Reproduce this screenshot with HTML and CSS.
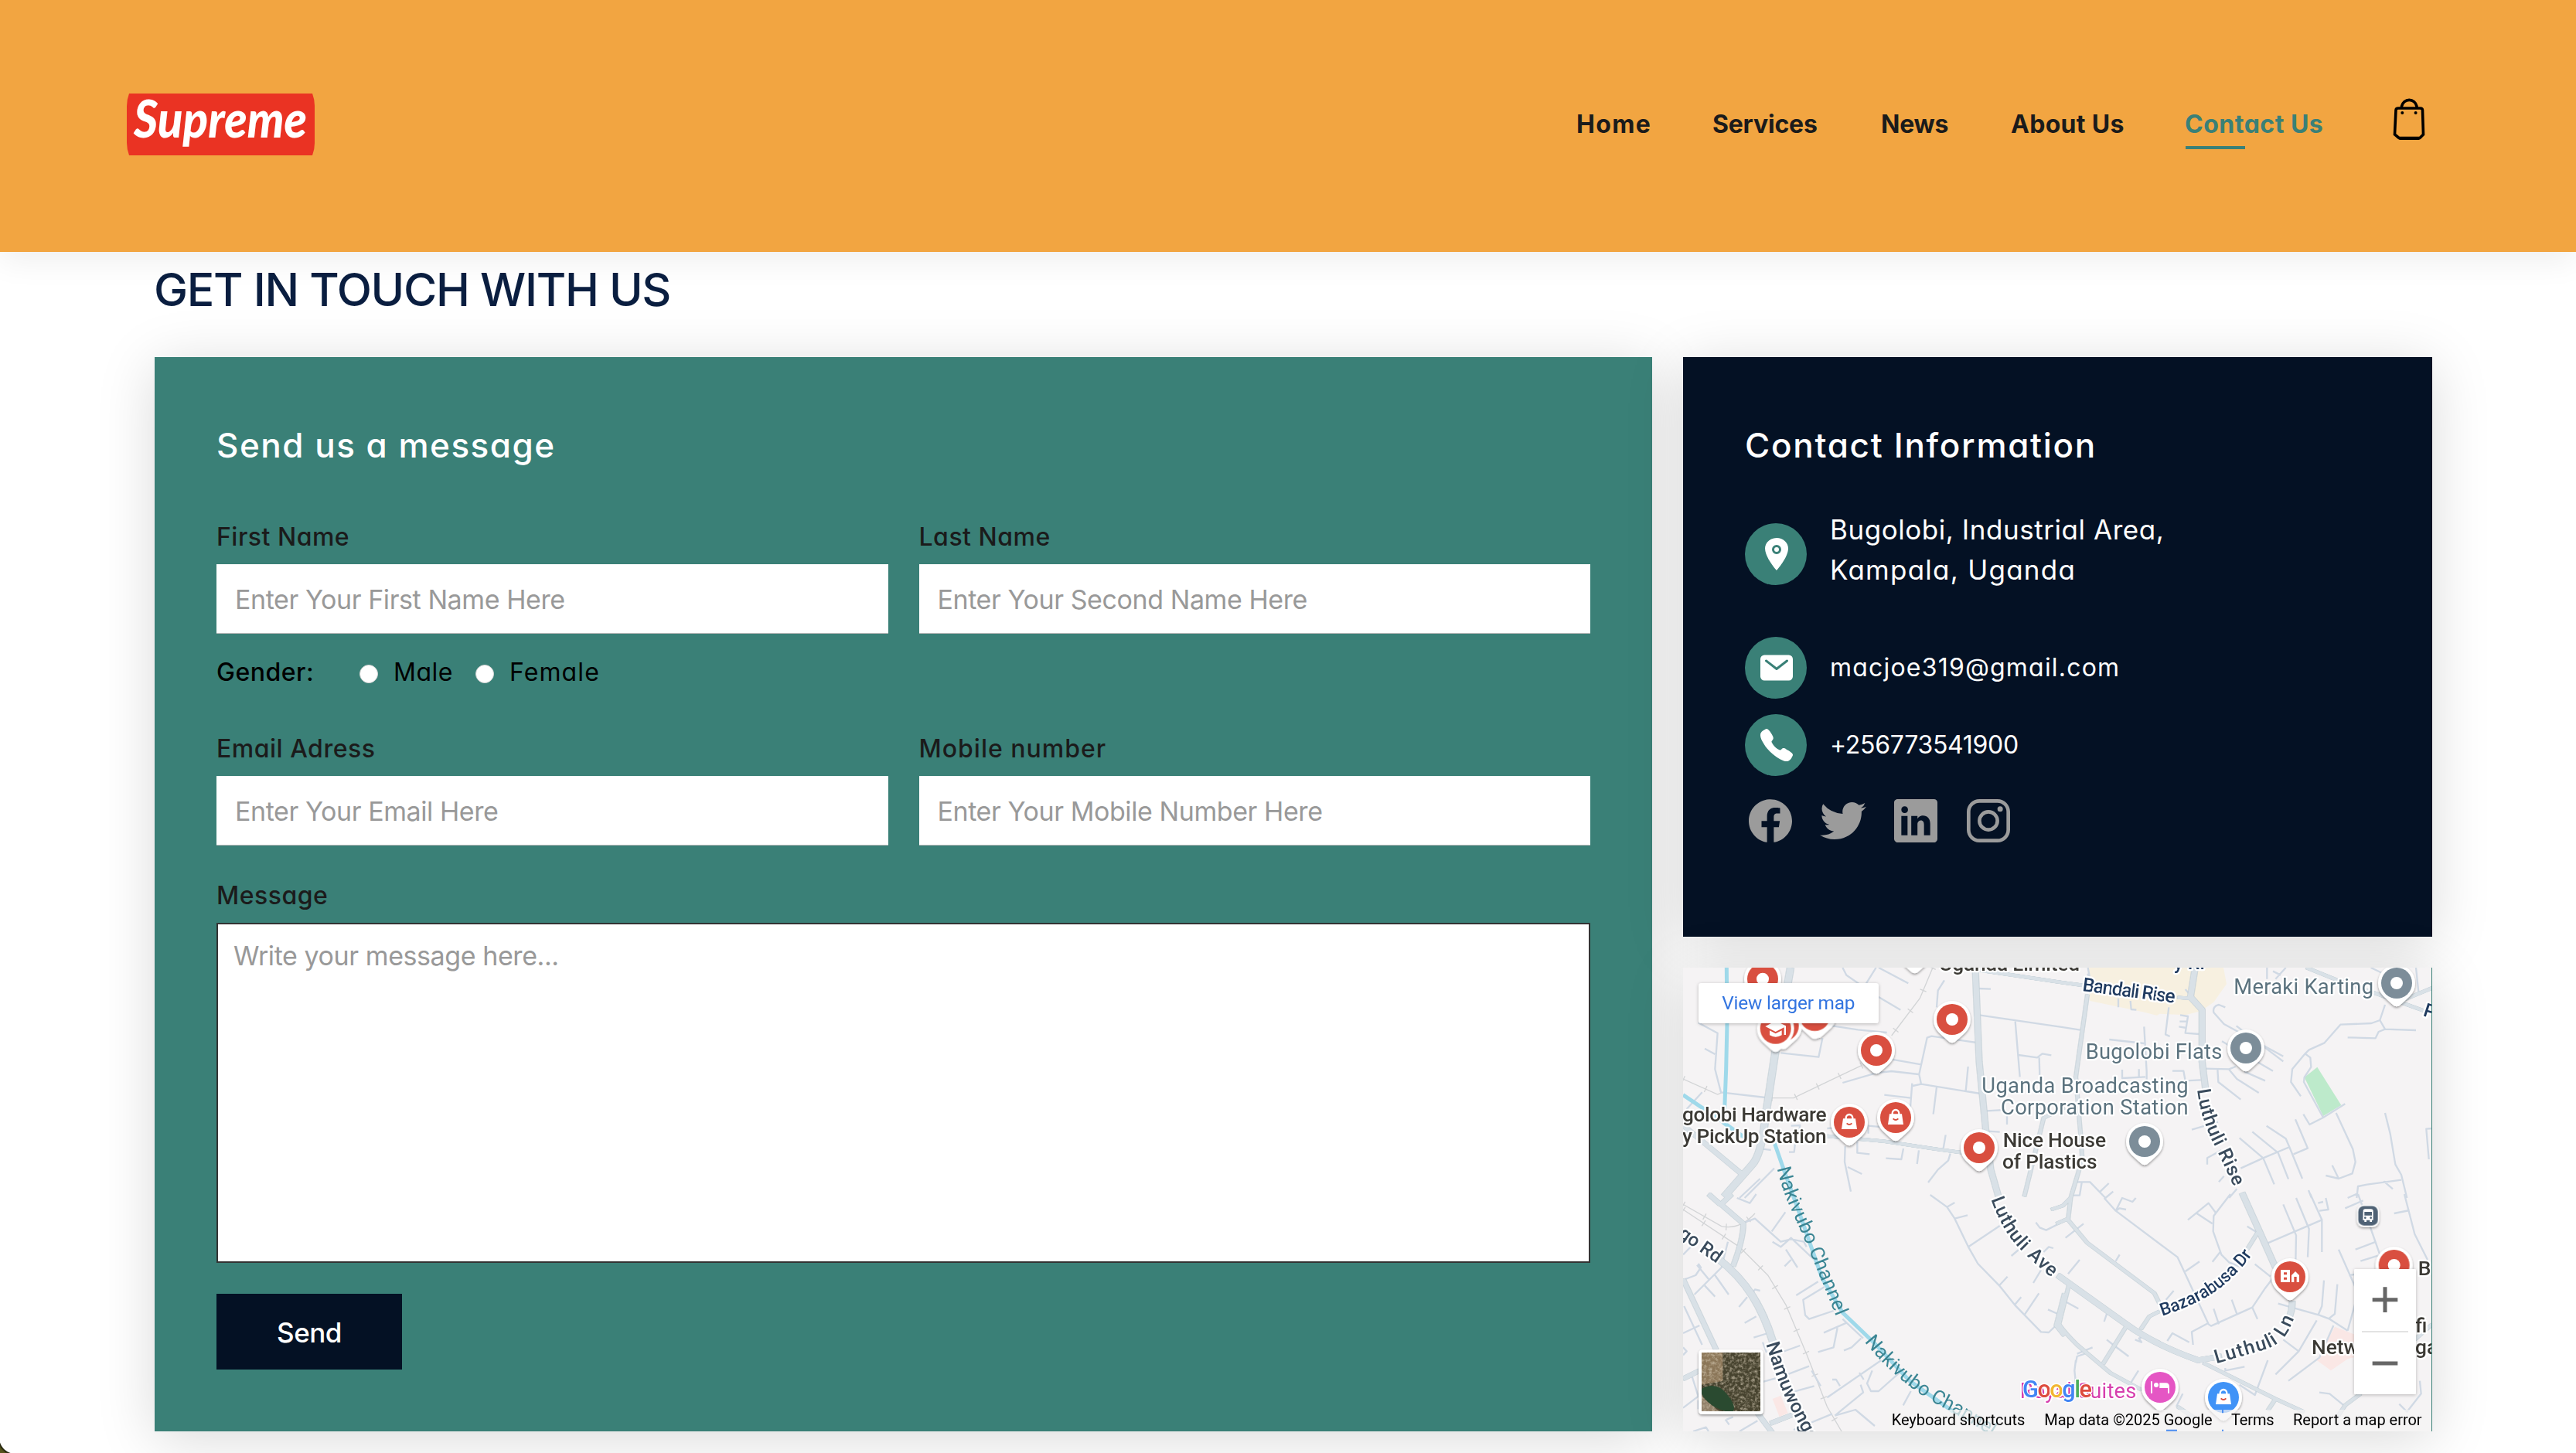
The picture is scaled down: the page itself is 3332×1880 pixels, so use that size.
FILE: index.html
```html
<!DOCTYPE html>
<html lang="en">
<head>
<meta charset="utf-8">
<title>Contact Us</title>
<link rel="stylesheet" href="styles.css">
</head>
<body>
<header class="header">
  <a class="logo" href="#">
    <svg viewBox="0 0 243 80" width="243" height="80">
      <path d="M3 0H240Q243 8 243 16V64Q243 72 240 80H3Q0 72 0 64V16Q0 8 3 0Z" fill="#ea3323"/>
      <text class="logo-text" x="9" y="56.500" textLength="224" lengthAdjust="spacingAndGlyphs">Supreme</text>
    </svg>
  </a>
  <nav class="nav">
    <a class="nav-link" href="#"><span class="nav-home">Home</span></a>
    <a class="nav-link" href="#"><span class="nav-services">Services</span></a>
    <a class="nav-link" href="#"><span class="nav-news">News</span></a>
    <a class="nav-link" href="#"><span class="nav-about">About Us</span></a>
    <a class="nav-link active" href="#"><span class="nav-contact">Contact Us</span></a>
    <a class="bag" href="#">
      <svg viewBox="26 12 60 62" width="60" height="62" fill="none" stroke="#000">
        <path d="M46.500 30V28.500A10 10.500 0 0 1 66 28.500V30" stroke-width="3.600"/>
        <path d="M42 31H70.500Q73.300 31 73.500 33.500L74.500 65L70 69.500H43L37.500 65L39 33.500Q39.200 31 42 31Z" stroke-width="3.600"/>
        <path d="M39 68.500H73L69 72H44Z" fill="#000" stroke="none"/>
        <circle cx="47.300" cy="37" r="2" fill="#000" stroke="none"/><circle cx="64.600" cy="37" r="2" fill="#000" stroke="none"/>
      </svg>
    </a>
  </nav>
</header>

<h1 class="page-title">GET IN TOUCH WITH US</h1>

<main class="contact">
  <form class="panel form">
    <h2 class="panel-title title-send">Send us a message</h2>
    <div class="row">
      <label class="field"><span class="label">First Name</span><input type="text" placeholder="Enter Your First Name Here"></label>
      <label class="field"><span class="label">Last Name</span><input type="text" placeholder="Enter Your Second Name Here"></label>
    </div>
    <div class="gender">
      <span class="gender-title">Gender:</span>
      <label class="choice choice-male"><input type="radio" name="gender"><span>Male</span></label>
      <label class="choice choice-female"><input type="radio" name="gender"><span>Female</span></label>
    </div>
    <div class="row">
      <label class="field"><span class="label">Email Adress</span><input type="text" placeholder="Enter Your Email Here"></label>
      <label class="field"><span class="label label-mobile">Mobile number</span><input type="text" placeholder="Enter Your Mobile Number Here"></label>
    </div>
    <label class="field message"><span class="label">Message</span><textarea placeholder="Write your message here..."></textarea></label>
    <button class="send" type="button">Send</button>
  </form>

  <div class="side">
    <section class="panel info">
      <h2 class="panel-title title-info">Contact Information</h2>
      <div class="info-row address">
        <span class="circle"><svg viewBox="0 0 512 512"><circle cx="256" cy="192" r="32"/><path d="M256 32C167.670 32 96 96.510 96 176c0 128 160 304 160 304s160-176 160-304c0-79.490-71.670-144-160-144zm0 224a64 64 0 1164-64 64.070 64.070 0 01-64 64z"/></svg></span>
        <p>Bugolobi, Industrial Area,<br><span class="city">Kampala, Uganda</span></p>
      </div>
      <div class="info-row email">
        <span class="circle"><svg viewBox="0 0 512 512"><path d="M424 80H88a56.060 56.060 0 00-56 56v240a56.060 56.060 0 0056 56h336a56.060 56.060 0 0056-56V136a56.060 56.060 0 00-56-56zm-14.180 92.630l-144 112a16 16 0 01-19.640 0l-144-112a16 16 0 1119.640-25.260L256 251.730l134.180-104.360a16 16 0 0119.640 25.260z"/></svg></span>
        <span class="mail-text">macjoe319@gmail.com</span>
      </div>
      <div class="info-row">
        <span class="circle"><svg viewBox="0 0 512 512"><path d="M391 480c-19.520 0-46.940-7.060-88-30-49.930-28-88.550-53.850-138.210-103.380C116.910 298.770 93.610 267.790 61 208.450c-36.840-67-30.560-102.120-23.540-117.130C45.820 73.380 58.160 62.650 74.110 52a176.300 176.300 0 0128.640-15.200c1-.43 1.930-.84 2.760-1.210 4.950-2.230 12.450-5.600 21.950-2 6.340 2.380 12 7.250 20.860 16 18.170 17.920 43 57.830 52.160 77.430 6.150 13.210 10.220 21.930 10.230 31.710 0 11.450-5.760 20.280-12.750 29.810-1.310 1.790-2.610 3.500-3.870 5.160-7.610 10-9.280 12.890-8.180 18.050 2.230 10.370 18.860 41.240 46.190 68.510s57.310 42.850 67.720 45.070c5.380 1.150 8.330-.59 18.650-8.470 1.480-1.130 3-2.300 4.590-3.470 10.660-7.930 19.080-13.540 30.260-13.540h.06c9.730 0 18.060 4.220 31.860 11.180 18 9.080 59.110 33.590 77.140 51.780 8.770 8.840 13.660 14.480 16.050 20.810 3.600 9.530.21 17-2 22-.37.83-.78 1.740-1.210 2.750a176.490 176.490 0 01-15.290 28.580c-10.630 15.900-21.400 28.210-39.380 36.580A67.420 67.420 0 01391 480z"/></svg></span>
        <span class="phone-text">+256773541900</span>
      </div>
      <div class="social">
        <svg viewBox="0 0 512 512"><path d="M480 257.350c0-123.700-100.300-224-224-224s-224 100.300-224 224c0 111.800 81.900 204.470 189 221.290V322.120h-56.890v-64.770H221V208c0-56.130 33.450-87.160 84.610-87.160 24.510 0 50.150 4.380 50.150 4.380v55.130H327.500c-27.810 0-36.510 17.260-36.510 35v42h62.120l-9.920 64.770H291v156.540c107.100-16.810 189-109.480 189-221.310z"/></svg>
        <svg viewBox="0 0 512 512"><path d="M496 109.500a201.800 201.800 0 01-56.550 15.300 97.510 97.510 0 0043.330-53.600 197.740 197.740 0 01-62.560 23.500A99.140 99.140 0 00348.310 64c-54.420 0-98.460 43.400-98.460 96.900a93.210 93.210 0 002.540 22.100 280.700 280.700 0 01-203-101.300A95.690 95.690 0 0036 130.400c0 33.600 17.530 63.300 44 80.700A97.500 97.500 0 0135.220 199v1.200c0 47 34 86.100 79 95a100.760 100.760 0 01-25.940 3.400 94.380 94.380 0 01-18.510-1.800c12.510 38.500 48.920 66.500 92.050 67.300A199.590 199.590 0 0139.500 405.600a203 203 0 01-23.500-1.400A278.680 278.680 0 00166.740 448c181.360 0 280.440-147.700 280.440-275.800 0-4.200-.11-8.400-.31-12.500A198.480 198.480 0 00496 109.500z"/></svg>
        <svg viewBox="0 0 512 512"><path d="M444.170 32H70.280C49.850 32 32 46.700 32 66.890v374.720C32 461.910 49.850 480 70.280 480h373.780c20.540 0 35.940-18.210 35.940-38.390V66.890C480.120 46.700 464.600 32 444.170 32zm-273.300 373.430h-64.180V205.880h64.180zM141 175.540h-.46c-20.540 0-33.840-15.290-33.840-34.430 0-19.490 13.650-34.420 34.650-34.420s33.850 14.820 34.310 34.420c-.01 19.140-13.310 34.430-34.660 34.430zm264.430 229.890h-64.180V296.320c0-26.140-9.340-44-32.560-44-17.740 0-28.240 12-32.910 23.690-1.750 4.200-2.220 9.920-2.220 15.760v113.660h-64.180V205.880h64.180v27.770c9.340-13.300 23.930-32.440 57.880-32.440 42.130 0 74 27.770 74 87.640z"/></svg>
        <svg viewBox="0 0 512 512"><path d="M349.330 69.330a93.620 93.620 0 0193.340 93.340v186.660a93.620 93.620 0 01-93.340 93.340H162.670a93.620 93.620 0 01-93.340-93.340V162.670a93.620 93.620 0 0193.340-93.340h186.660m0-37.330H162.670C90.800 32 32 90.800 32 162.670v186.660C32 421.200 90.800 480 162.670 480h186.660C421.200 480 480 421.200 480 349.330V162.670C480 90.800 421.200 32 349.330 32z"/><circle cx="377.330" cy="134.670" r="28"/><circle cx="256" cy="256" r="93" fill="none" stroke="#9b9b9b" stroke-width="37"/></svg>
      </div>
    </section>

    <section class="map">
      <svg viewBox="21 36 2907 1800" width="969" height="600">
        <defs>
          <g id="pin"><path d="M-51 51L-16 83Q0 98 16 83L51 51A72 72 0 1 0 -51 51Z" fill="#fff"/><circle r="60"/></g>
          <g id="lock"><path d="M-24 -13H24L30 28H-30Z" fill="#fff"/><path d="M-13 -10V-15A13 14 0 0 1 13 -15V-10" fill="none" stroke="#fff" stroke-width="7"/><path d="M-10 5Q0 15 10 5" fill="none" stroke="#d9503f" stroke-width="6"/></g>
          <filter id="lift" x="-20%" y="-20%" width="140%" height="150%"><feDropShadow dx="0" dy="5" stdDeviation="5" flood-color="#000" flood-opacity=".4"/></filter>
          <filter id="terrain"><feTurbulence type="fractalNoise" baseFrequency=".09" numOctaves="3" seed="4"/><feColorMatrix values="0 0 0 0 .7  0 0 0 0 .62  0 0 0 0 .48  0 1.500 0 0 -.62"/></filter>
          <path id="p-nak1" d="M386 815Q405 900 440 975T520 1158T615 1390"/>
          <path id="p-nak2" d="M725 1488Q795 1576 875 1641T1035 1746T1260 1880"/>
          <path id="p-rise" d="M2016 510Q2030 620 2075 710T2162 895"/>
          <path id="p-ave" d="M1216 935Q1260 1060 1330 1130T1460 1245"/>
          <path id="p-nam" d="M343 1497Q385 1640 430 1730T520 1900"/>
          <path id="p-baz" d="M1880 1388Q2060 1330 2145 1245T2240 1130"/>
          <path id="p-ln" d="M2090 1573L2280 1518Q2350 1495 2375 1435L2405 1370"/>
          <clipPath id="pic"><rect x="93" y="1530" width="228" height="228"/></clipPath>
        </defs>
        <rect x="21" y="36" width="2907" height="1800" fill="#f5f3f4"/>
        <path d="M1592 36H2118L2130 100L2080 170L2030 205L1970 220L1870 215L1860 222L1815 210L1600 165L1592 100Z" fill="#f7f0e0"/>
        <path d="M2432 462L2482 422L2575 570L2505 612Z" fill="#bdeacb"/>
        <path d="M2550 1430L2640 1465L2700 1530L2600 1555L2535 1600L2480 1560ZM368 1710L400 1697L428 1765L395 1780Z" fill="#fae7e5"/>

        <g class="rail">
          <path d="M990 36L940 155L830 300M715 415L600 470L450 542H365M21 468L155 528L175 520M21 955L170 1040Q240 1055 300 990M21 975L240 1120L350 1230L420 1345L500 1535L580 1740L650 1860"/>
          <path class="ties" d="M990 36L940 155L830 300M715 415L600 470L450 542H365M21 468L155 528M21 955L170 1040Q240 1055 300 990M21 975L240 1120L350 1230L420 1345L500 1535L580 1740L650 1860"/>
        </g>

        <g class="minor">
          <path d="M640 36L655 65L720 110M770 36L730 100M780 36L895 97M780 150L865 200M1035 85L1010 125L1005 190M600 262L700 277L812 288M80 250L155 290L145 430L168 520L340 540M105 350L145 372M400 367L547 383L562 310M830 392L945 412M640 483L770 445L830 438L935 450M1160 327L985 302L968 308L937 450L945 488L1175 525M910 485L902 590M802 530L905 542M912 495L945 488M1127 420L1118 515M1005 500L992 605M1170 220L1500 268L1562 278M1310 245L1328 460M1322 375L1395 385L1415 370L1450 376M1403 385L1405 460M1165 117L1215 119M1200 592L1270 588M1278 610V645M1195 670L1250 674"/>
          <path d="M650 730L648 790L672 905M660 810L715 837M697 710V755L745 760M808 776L868 780L876 738M936 745L929 798M1031 738L1040 685M1058 758L1050 785L1010 820L972 870M740 650L900 665M580 660L740 650V680M330 740L362 744M432 752H452L458 700M95 520L35 585M440 650L475 648L470 680M375 815L260 930M320 855L240 930"/>
          <path d="M1592 36L1600 80M1710 155V190M1757 165L1760 198L1780 200M1906 190L1893 295L1910 303M1810 265L1820 440V470M1675 315L1810 330M1725 432V465L1815 460M1790 430V465M1950 220L1980 225L1970 290L2025 294M1945 265L1975 270M1948 245H1975M1920 437H1963L1970 475L2030 472M2042 428L2140 430L2165 420M2095 430L2098 480L2185 548M2140 432L2170 468L2255 522M2125 190L2100 180Q2075 185 2080 210L2120 255L2350 380M2168 262L2350 400M2112 322L2310 437M2200 440L2280 475"/>
          <path d="M2745 180L2725 240L2692 252L2572 257L2510 328L2450 355L2435 370L2385 430L2380 480L2418 535M2435 370L2455 385L2458 422L2432 462L2430 480L2505 618L2590 565M2428 605L2452 645L2505 618M2555 600L2620 740L2630 790L2618 835L2565 855L2515 843M2565 855L2540 803M2725 240L2745 275L2865 279M2745 275L2720 285L2708 310L2600 307M2745 600L2765 680L2785 800L2808 840L2830 930M2285 650L2360 700L2375 735L2424 855M2230 673L2330 755L2370 857M2180 697L2272 775L2315 877M2185 815L2272 775L2375 732M2397 625L2445 737L2390 760M2097 635L1995 665M2120 845L2100 868M2055 800L2055 775L2110 745M2928 660L2905 662L2915 780M2635 930L2640 885L2675 878L2808 860M2600 930L2640 912M2740 865L2775 895M2448 900L2460 930M2287 36V80M2360 36L2320 80M2310 50L2340 65M2690 36L2740 60M2865 36L2875 130M1970 120L2000 155M1590 60L1600 75"/>
          <path d="M1550 868H1600L1660 930M1568 870L1560 920H1535M1640 905L1673 873M1660 930L1690 905M2140 930L2170 895M1655 930L1700 980L1940 1160L2060 1420L2070 1427L2230 1355L2280 1280L2330 1215M1700 980L1725 930L1765 945L1778 930M1700 980L1715 970L1740 975M1980 1015L2060 950L2090 990M2010 987L2075 1030M2145 915L2080 1000L2078 1060L2110 1150L2140 1180L2190 1200M2105 1140L2075 1178M1970 1215L2025 1177M2000 1500L1995 1450L2060 1415M2100 1420L2080 1360M2170 1380L2150 1325M2250 1400L2230 1355M2040 1250L2060 1305M1895 1325L1925 1290M2350 955L2400 1075L2398 1180M2400 930L2450 1050L2445 1160M2455 915L2500 1015V1140M2290 1105L2500 1015M2490 980L2525 975L2515 930M2505 945L2485 950M2240 1187L2300 1235M2210 1040L2250 1065M2820 915L2860 1070L2910 1170M2780 990L2840 978M2640 915L2690 1050L2725 1150M2590 970L2660 940M2630 1130L2710 1100M2650 1175L2730 1150M2565 1130L2640 1300L2600 1445M2605 1230L2640 1225M2330 1340L2490 1385L2530 1400L2600 1445M2508 1250L2500 1350L2485 1385M2560 1265L2550 1380L2525 1400M2480 1405L2410 1525L2320 1615M2350 1480L2410 1525M2545 1425L2490 1550L2370 1640M2180 1655L2240 1695L2290 1560M2490 1685L2530 1690L2585 1735M2880 1640L2885 1690L2830 1760L2800 1730"/>
          <path d="M1500 1330L1555 1360M1655 1410L1665 1380M1665 1480L1690 1500L1750 1545M1900 1485L1920 1455L1985 1490M1775 1480L1800 1490L1790 1475L1805 1470M1550 1535L1610 1510M1545 1570L1550 1545L1580 1535M1545 1560L1540 1600L1550 1700M1760 1645L1788 1600M1935 1740L1960 1690M1515 1225L1560 1170M1505 1085L1575 1030M1700 1175L1715 1150M2125 1590V1600L2200 1585"/>
          <path d="M980 918L1045 965L1075 1010L1128 1120L1165 1185L1248 1270L1308 1345L1410 1450L1440 1452L1468 1425M1045 965L1075 948M1075 1010L1125 997M1128 1120L1250 1038M1248 1270L1280 1235M1308 1345L1333 1315M1345 1385L1402 1300M1437 1363L1475 1380M1380 1260L1410 1210M1390 1025L1405 1045L1430 1055L1500 1020M1295 1155L1330 1125M1420 1140L1440 1120L1458 1125"/>
          <path d="M230 930L280 950L305 915M260 1025L300 1010L400 1100L440 1090L490 1100L500 1120M365 1060L418 985M368 1100L400 1120L440 1085L530 1170M420 1130L465 1200M415 1195L440 1170M460 1308L545 1255M570 1275L487 1325L495 1385L510 1400L605 1368M567 1453L655 1415M620 1435L605 1510L545 1528M645 1522L675 1510L712 1475M400 1530L475 1503M295 1472L350 1455M260 1415L305 1390M238 1353L270 1315M290 1300L300 1285L320 1290M65 1305L170 1200L195 1100M30 1245L70 1230L90 1200L80 1185M75 1190L120 1245M105 1270L145 1313M145 1230L198 1305M21 1150L70 1100M25 1350L95 1500M21 1455L85 1425M21 1510L35 1525L21 1540M330 1490L345 1530M400 1625L510 1583M325 1645L380 1630M440 1685L530 1660M580 1705L790 1560M705 1608L722 1635M600 1635H615L630 1660M520 1600L555 1660M640 1400L720 1475M610 1775L720 1685L710 1655M755 1600L735 1650L750 1680L780 1680L870 1600M905 1680L875 1735M610 1775L690 1752L765 1815M450 1830L600 1768M21 1745L80 1700L55 1620M80 1715V1750M185 1790L200 1810M190 1790L215 1780M240 1836L310 1795M60 1836L110 1820L120 1836"/>
        </g>

        <g class="edge"><use href="#majors"/></g>
        <g class="major">
          <g id="majors">
            <path stroke-width="26" d="M438 36L425 110L378 370L340 620Q325 760 290 800L180 925M150 1160Q240 1230 290 1310T370 1490"/>
            <path stroke-width="18" d="M21 648L258 845M210 915L168 955L255 1030Q255 1090 215 1195M120 915L165 955M21 1245L150 1520M310 1765L370 1845M360 1805L450 1770M21 1632L85 1600"/>
            <path stroke-width="22" d="M1155 36L1170 400L1195 660L1215 820L1245 925M2008 36L1990 150L2035 200L2035 400L2050 520M2190 910L2260 1065L2320 1200M2385 1330Q2385 1370 2370 1400M1475 1230L1740 1420Q1850 1500 2020 1560L2110 1545"/>
            <path stroke-width="13" d="M1165 45L1500 95L1575 105M1590 140L1545 460L1565 700L1570 780L1525 930L1495 960L1450 975M1940 152L1985 155M580 690L800 710L1000 740L1110 755M1500 580L1420 620L1345 925M2440 36L2560 85L2720 140L2900 205M2820 160L2928 115M1525 930L1515 1015L1590 1105L1850 1300L1870 1340M2250 1065L2210 1130M1870 1370L1830 1390L1797 1440M1520 1260L1480 1420Q1500 1450 1550 1500L1680 1610L1800 1675M1740 1430L1650 1575M2040 1570L2320 1710L2430 1760M2320 1710L2290 1755M2650 1690L2590 1735L2560 1780M2860 1480L2928 1420M1500 1300L1468 1425L1500 1465M1940 1740L2000 1780M1470 1030L1515 1010"/>
          </g>
        </g>
        <g class="water"><path d="M190 36L192 250L188 430L180 640L250 690M21 530L140 610L260 695M370 700L410 815L480 1010L560 1240L640 1375L760 1490L900 1640L1070 1760"/><path d="M1070 1760L1230 1850" opacity=".3"/></g>

        <g filter="url(#lift)">
          <g fill="#d9503f">
            <use href="#pin" x="330" y="80"/><use href="#pin" x="545" y="218"/><use href="#pin" x="532" y="222"/><use href="#pin" x="410" y="262"/><use href="#pin" x="380" y="272"/>
            <use href="#pin" x="1065" y="237"/><use href="#pin" x="771" y="357"/><use href="#pin" x="666" y="636"/><use href="#pin" x="846" y="618"/><use href="#pin" x="1170" y="735"/>
            <use href="#pin" x="2376" y="1236"/><use href="#pin" x="2780" y="1191"/>
          </g>
          <g fill="#7b8d99"><use href="#pin" x="2205" y="348"/><use href="#pin" x="1812" y="711"/><use href="#pin" x="2790" y="96"/></g>
          <use href="#pin" x="920" y="-33" fill="#d9503f"/>
          <use href="#pin" x="1872" y="1665" fill="#e557c4"/>
          <use href="#pin" x="2118" y="1704" fill="#3f93f7"/>
          <rect x="2636" y="956" width="86" height="86" rx="26" fill="#fff"/><rect x="2641" y="961" width="76" height="76" rx="22" fill="#4f6275"/>
        </g>
        <g fill="#fff">
          <circle cx="330" cy="80" r="24"/><circle cx="1065" cy="237" r="24"/><circle cx="771" cy="357" r="24"/><circle cx="1170" cy="735" r="24"/><circle cx="2205" cy="348" r="24"/><circle cx="1812" cy="711" r="24"/><circle cx="2790" cy="96" r="24"/><circle cx="2780" cy="1191" r="24"/>
          <path d="M380 243L420 262V297H413V268L380 285L340 264ZM357 280L380 292L404 280V298Q380 312 357 298Z"/>
          <path fill-rule="evenodd" d="M2340 1209H2376V1257H2340ZM2352 1219V1228H2364V1219ZM2352 1238V1247H2364V1238ZM2382 1257V1230L2397 1215L2412 1230V1257H2402V1236H2392V1257Z"/>
          <path d="M1836 1642H1842V1668H1902V1688H1908V1662Q1908 1648 1894 1648H1870V1668H1842V1688H1836Z"/><circle cx="1857" cy="1656" r="9"/>
          <path fill-rule="evenodd" d="M2660 981Q2660 973 2668 973H2690Q2699 973 2699 981V1016H2694V1023H2686V1016H2673V1023H2665V1016H2659ZM2665 984V998H2694V984Z"/>
        </g>
        <circle cx="2668" cy="1007" r="4" fill="#4f6275"/><circle cx="2690" cy="1007" r="4" fill="#4f6275"/>
        <use href="#lock" x="666" y="635"/><use href="#lock" x="846" y="617"/><use href="#lock" x="2118" y="1703"/>

        <g class="poi">
          <text x="1015" y="48" textLength="545">Uganda Limited</text>
          <text x="18" y="632" textLength="560">golobi Hardware</text>
          <text x="18" y="716" textLength="560">y PickUp Station</text>
          <text x="1262" y="731" textLength="400">Nice House</text>
          <text x="1260" y="815" textLength="368">of Plastics</text>
          <text x="2873" y="1229">B</text><text x="2460" y="1535">Netw</text><text x="2862" y="1451">fi</text><text x="2862" y="1535">ga</text>
        </g>
        <g class="place">
          <text x="1180" y="523" textLength="802">Uganda Broadcasting</text>
          <text x="1254" y="607" textLength="728">Corporation Station</text>
          <text x="2158" y="137" textLength="542">Meraki Karting</text>
          <text x="1583" y="389" textLength="530">Bugolobi Flats</text>
        </g>
        <g class="road">
          <text x="1569" y="126" textLength="362" transform="rotate(7.500 1569 126)" fill="#1f3a5f">Bandali Rise</text>
          <text x="1925" y="42" fill="#1f3a5f">y Ri</text>
          <text x="2890" y="222" transform="rotate(18 2890 222)" fill="#1f3a5f">P</text>
          <text x="0" y="1078" textLength="185" transform="rotate(35 0 1078)" font-size="72">go Rd</text>
          <text textLength="405"><textPath href="#p-rise">Luthuli Rise</textPath></text>
          <text textLength="390"><textPath href="#p-ave">Luthuli Ave</textPath></text>
          <text><textPath href="#p-nam">Namuwongo</textPath></text>
          <text textLength="432" font-size="68" fill="#1f3a5f"><textPath href="#p-baz">Bazarabusa Dr</textPath></text>
          <text textLength="370"><textPath href="#p-ln">Luthuli Ln</textPath></text>
        </g>
        <g class="river">
          <text textLength="620"><textPath href="#p-nak1">Nakivubo Channel</textPath></text>
          <text textLength="620"><textPath href="#p-nak2">Nakivubo Channel</textPath></text>
        </g>
        <text class="hotel" x="1328" y="1707" textLength="452">Royal Suites</text>
        <text class="google" x="1338" y="1704" textLength="270"><tspan fill="#4285f4">G</tspan><tspan fill="#dd4b3e">o</tspan><tspan fill="#f2b632">o</tspan><tspan fill="#4285f4">g</tspan><tspan fill="#4caf5c">l</tspan><tspan fill="#dd4b3e">e</tspan></text>

        <rect x="820" y="1752" width="2105" height="84" fill="#f5f3f4" opacity=".7"/>
        <path d="M2115 1752V1765M1896 1832H1938M2112 1832H2118" stroke="#4a8df0" stroke-width="6"/>
        <g class="credits">
          <text x="830" y="1812" textLength="518">Keyboard shortcuts</text>
          <text x="1423" y="1812" textLength="652">Map data ©2025 Google</text>
          <text x="2148" y="1812" textLength="167">Terms</text>
          <text x="2388" y="1812" textLength="500">Report a map error</text>
        </g>

        <g filter="url(#lift)">
          <rect x="81" y="1519" width="252" height="251" rx="14" fill="#fff"/>
        </g>
        <g clip-path="url(#pic)">
          <rect x="93" y="1530" width="228" height="228" fill="#47432f"/>
          <path d="M93 1530H175V1640L93 1655Z" fill="#8b7658"/>
          <path d="M93 1700L160 1758H93Z" fill="#92816a"/>
          <rect x="93" y="1530" width="228" height="228" filter="url(#terrain)"/>
          <path d="M93 1670Q150 1640 190 1690T215 1758H185Q120 1740 93 1690Z" fill="#2a4a30"/>
        </g>
        <g class="control">
          <rect x="81" y="96" width="699" height="156" rx="10"/>
          <rect x="2625" y="1206" width="240" height="486" rx="4"/>
        </g>
        <text class="larger" x="172" y="197" textLength="516">View larger map</text>
        <path d="M2696 1325H2794M2745 1276V1374M2696 1572H2794" stroke="#666" stroke-width="15"/>
        <path d="M2655 1449H2835" stroke="#e3e3e3" stroke-width="6"/>
        <rect x="2925" y="36" width="3" height="1800" fill="#3a8077"/>
      </svg>
    </section>
  </div>
</main>
</body>
</html>
```
FILE: styles.css
```css
* { box-sizing: border-box; margin: 0; padding: 0; }

body {
  position: relative;
  height: 1880px;
  overflow: hidden;
  background: #fff;
  font-family: Inter, "Open Sans", sans-serif;
  font-feature-settings: "cv11", "calt" 0;
  color: #1b1b1b;
}

/* rounded window corner */
body::after {
  content: "";
  position: absolute;
  left: 0;
  bottom: 0;
  width: 20px;
  height: 20px;
  background: radial-gradient(circle at 100% 0, transparent 20.500px, #1c1c08 21.500px, #55531c 24px);
}

.header {
  height: 326px;
  padding: 0 186px 4px 164px;
  display: flex;
  align-items: center;
  justify-content: space-between;
  background: #f2a541;
  box-shadow: 0 10px 40px rgba(0, 0, 0, .07);
}
.logo { display: block; height: 80px; }
.logo-text { font: italic 900 66px Lato, sans-serif; fill: #fff; }

.nav {
  display: grid;
  grid-template-columns: 177px 218px 166px 226px 259px 60px;
  align-items: center;
}
.nav-link {
  display: block;
  padding: 12px 0;
  font-size: 32px;
  line-height: 40px;
  font-weight: 650;
  color: #1b1b1b;
  text-decoration: none;
  white-space: nowrap;
}
.nav-home { letter-spacing: 1.300px; margin-left: -1px; }
.nav-services { letter-spacing: -.2px; margin-left: -2px; }
.nav-news { letter-spacing: -.2px; margin-left: -2px; }
.nav-about { letter-spacing: .3px; }
.nav-contact { letter-spacing: .5px; margin-left: -1px; }
.nav-link.active { position: relative; color: #3a8077; }
.nav-link.active::after {
  content: "";
  position: absolute;
  left: 0;
  bottom: 0;
  width: 77px;
  height: 4px;
  background: #3a8077;
}
.bag { height: 62px; margin-top: -18px; }

.page-title {
  height: 136px;
  padding-left: 199px;
  font-size: 59px;
  line-height: 97px;
  font-weight: 540;
  letter-spacing: -1.300px;
  color: #0a1e40;
}

.contact {
  display: grid;
  grid-template-columns: 1937px 969px;
  gap: 40px;
  padding-left: 200px;
  height: 1390px;
}
.panel { padding: 80px; box-shadow: 0 10px 70px rgba(0, 0, 0, .15); }
.form { background: #3a8077; }
.panel-title {
  font-size: 44px;
  line-height: 68px;
  font-weight: 550;
  color: #fff;
}
.form .panel-title { margin-bottom: 60px; }
.title-send { letter-spacing: 1.500px; }
.title-info { letter-spacing: 1.700px; }

.row { display: grid; grid-template-columns: 1fr 1fr; gap: 40px; }
.field { display: block; }
.label {
  display: block;
  margin-bottom: 10px;
  font-size: 32px;
  line-height: 50px;
  font-weight: 520;
  letter-spacing: .500px;
}
.label-mobile { letter-spacing: 1px; }
input[type="text"], textarea {
  display: block;
  width: 100%;
  border: 0;
  border-radius: 0;
  background: #fff;
  font: 400 34px Inter, sans-serif;
  letter-spacing: -.42px;
  resize: none;
}
input[type="text"] { height: 90px; padding: 2px 24px 0; border-bottom: 1px solid #b9b9b9; }
textarea { height: 440px; padding: 20px; border: 2px solid #333; }
::placeholder { color: #999; opacity: 1; }

.gender {
  display: flex;
  align-items: center;
  height: 50px;
  margin: 24px 0 50px;
  color: #000;
  font-size: 32px;
}
.gender-title { width: 185px; font-weight: 540; letter-spacing: .500px; }
.choice { display: flex; align-items: center; gap: 20px; }
.choice-male { width: 150px; letter-spacing: .500px; }
.choice-female { letter-spacing: 1.100px; }
.choice input {
  appearance: none;
  width: 24px;
  height: 24px;
  margin-top: 6px;
  border-radius: 50%;
  background: #fff;
  border: 1px solid #d5d5d5;
}
.message { margin-top: 40px; }
.send {
  display: block;
  width: 240px;
  height: 98px;
  margin-top: 40px;
  padding-top: 2px;
  border: 0;
  background: #041124;
  color: #fff;
  font: 550 35px Inter, sans-serif;
  letter-spacing: -.500px;
}

.info { height: 750px; background: #041124; color: #fff; }
.info-row { display: flex; align-items: center; gap: 30px; height: 80px; margin-bottom: 20px; font-size: 32px; }
.address { align-items: flex-start; height: 104px; margin: 50px 0 60px; font-size: 35px; line-height: 51.500px; letter-spacing: .550px; }
.address .circle { margin-top: 17px; }
.city { letter-spacing: 1.250px; }
.mail-text { letter-spacing: 1.200px; padding-bottom: 2px; }
.phone-text { letter-spacing: -.3px; padding-bottom: 2px; }
.circle {
  flex: none;
  display: grid;
  place-items: center;
  width: 80px;
  height: 80px;
  border-radius: 50%;
  background: #3a8077;
}
.circle svg { width: 48px; height: 48px; margin-left: 1px; fill: #fff; }
.social { display: flex; gap: 30px; margin: 26px 0 0 1px; }
.social svg { width: 64px; height: 64px; fill: #9b9b9b; }

.map { height: 600px; margin-top: 40px; box-shadow: 0 10px 70px rgba(0, 0, 0, .15); }
.map svg { display: block; }
.map text { font-family: Roboto, sans-serif; paint-order: stroke; stroke-linejoin: round; }
.minor { fill: none; stroke: #d0d9e4; stroke-width: 7; stroke-linejoin: round; }
.rail { fill: none; stroke: #d2d4d6; stroke-width: 4; }
.ties { stroke-width: 26; stroke-dasharray: 4 90; }
.major, .edge { fill: none; stroke-linejoin: round; }
.major { stroke: #d9e1e7; }
.edge { filter: drop-shadow(2px 0 0 #c2ced5) drop-shadow(-2px 0 0 #c2ced5); stroke: #c2ced5; }
.water { fill: none; stroke: #9fd9ea; stroke-width: 15; }
.poi { font-size: 79px; font-weight: 500; fill: #3c3a35; stroke: #fff; stroke-width: 14px; }
.place { font-size: 82px; fill: #5b727e; stroke: #fff; stroke-width: 14px; }
.road { font-size: 74px; font-weight: 550; fill: #3a4b5c; stroke: #fff; stroke-width: 14px; }
.river { font-size: 76px; fill: #3a8593; }
.hotel { font-size: 82px; fill: #d63fae; stroke: #fff; stroke-width: 12px; }
.google { font-size: 92px; font-weight: 500; stroke: #fff; stroke-width: 8px; }
.credits { font-size: 60px; fill: #000; }
.control { fill: #fff; filter: drop-shadow(0 3px 6px rgba(0, 0, 0, .25)); }
.larger { font-size: 73px; fill: #3274e0; }
```
